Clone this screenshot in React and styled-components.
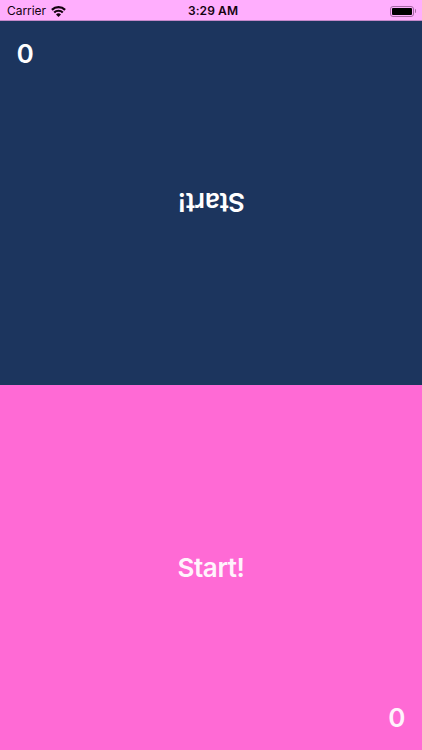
import React from 'react';
import styled, { createGlobalStyle } from 'styled-components';

function StatusBar() {
  return (
    <Bar>
      <CarrierContainer>
        <Carrier>Carrier</Carrier>
        <svg width="15" height="11" viewBox="0 0 15 11">
          <path
            d="M.9 3.9a9.4 9.4 0 0 1 13.2 0M3.2 6.5a6.1 6.1 0 0 1 8.6 0"
            fill="none"
            stroke="#14020f"
            strokeWidth="2.2"
          />
          <path d="M7.5 11 5 8.5a3.5 3.5 0 0 1 5 0z" fill="#14020f" />
        </svg>
      </CarrierContainer>
      <Time>3:29 AM</Time>
      <BatteryContainer>
        <Battery>
          <BatteryLevel />
        </Battery>
        <BatteryTip />
      </BatteryContainer>
    </Bar>
  );
}

function Player(props) {
  return (
    <Side $color={props.color} $textColor={props.textColor} $flipped={props.flipped}>
      <Start>Start!</Start>
      <Score>{props.score}</Score>
    </Side>
  );
}

function App() {
  return (
    <Screen>
      <GlobalStyle />
      <StatusBar />
      <Player color="#1c355e" textColor="#fff" score={0} flipped />
      <Player color="#ff6ad5" textColor="#fff3fc" score={0} />
    </Screen>
  );
}

export default App;

const GlobalStyle = createGlobalStyle`
  body {
    margin: 0;
    font-family: Inter, 'Liberation Sans', sans-serif;
  }
`;

const Screen = styled.div`
  display: grid;
  grid-template-rows: 21px 364px 365px;
  width: 422px;
  height: 750px;
  overflow: hidden;
`;

const Bar = styled.div`
  display: grid;
  grid-template-columns: 1fr auto 1fr;
  align-items: center;
  box-sizing: border-box;
  padding: 1px 6px 0 7px;
  border-bottom: 1px solid #c489ca;
  background-color: #ffaefd;
  color: #14020f;
`;

const CarrierContainer = styled.div`
  display: flex;
  align-items: center;
  gap: 5px;
`;

const Carrier = styled.span`
  font-size: 12px;
  line-height: 20px;
  letter-spacing: -0.05px;
`;

const Time = styled.span`
  padding-left: 3px;
  font-size: 12px;
  font-weight: 600;
  line-height: 20px;
  letter-spacing: 0.1px;
`;

const BatteryContainer = styled.div`
  display: flex;
  align-items: center;
  justify-content: flex-end;
  gap: 1px;
`;

const Battery = styled.div`
  width: 24px;
  height: 11px;
  box-sizing: border-box;
  padding: 1px;
  border: 1px solid #a568a5;
  border-radius: 3px;
`;

const BatteryLevel = styled.div`
  height: 100%;
  border-radius: 1px;
  background-color: #000;
`;

const BatteryTip = styled.div`
  width: 1px;
  height: 4px;
  border-radius: 0 1px 1px 0;
  background-color: #a568a5;
`;

const Side = styled.div`
  display: grid;
  grid-template-rows: 1fr auto 1fr;
  box-sizing: border-box;
  padding: ${props => (props.$flipped ? '2px 17px 0 16px' : '0 17px')};
  background-color: ${props => props.$color};
  color: ${props => props.$textColor};
  font-size: 26px;
  font-weight: 600;
  line-height: 32px;
  letter-spacing: -0.4px;
  transform: ${props => (props.$flipped ? 'rotate(180deg)' : 'none')};
`;

const Start = styled.div`
  grid-row: 2;
  justify-self: center;
`;

const Score = styled.div`
  grid-row: 3;
  align-self: end;
  justify-self: end;
  padding-bottom: 16px;
`;
